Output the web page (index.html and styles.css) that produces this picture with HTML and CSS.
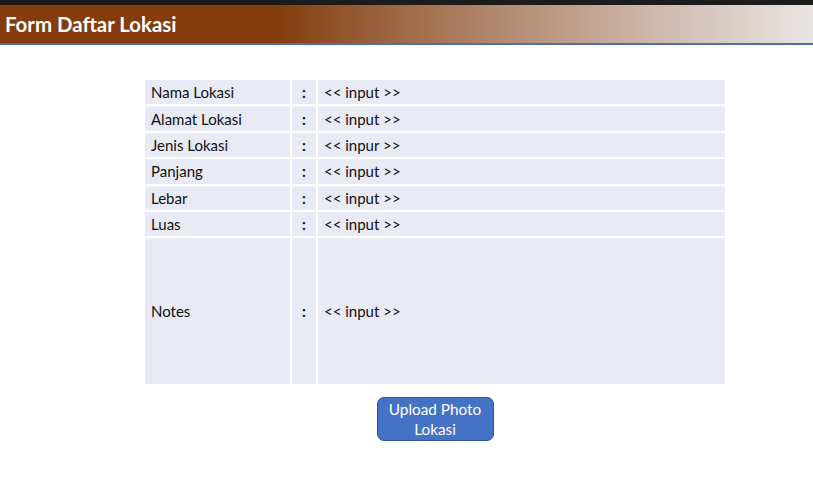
FILE: index.html
```html
<!DOCTYPE html>
<html>
<head>
<meta charset="utf-8">
<link rel="stylesheet" href="styles.css">
</head>
<body>
<div class="topstrip"></div>
<header class="titlebar"><h1 class="title">Form Daftar Lokasi</h1></header>
<main class="content">
  <div class="form-grid">
    <div class="cell label">Nama Lokasi</div><div class="cell colon">:</div><div class="cell value">&lt;&lt; input &gt;&gt;</div>
    <div class="cell label">Alamat Lokasi</div><div class="cell colon">:</div><div class="cell value">&lt;&lt; input &gt;&gt;</div>
    <div class="cell label">Jenis Lokasi</div><div class="cell colon">:</div><div class="cell value">&lt;&lt; inpur &gt;&gt;</div>
    <div class="cell label">Panjang</div><div class="cell colon">:</div><div class="cell value">&lt;&lt; input &gt;&gt;</div>
    <div class="cell label">Lebar</div><div class="cell colon">:</div><div class="cell value">&lt;&lt; input &gt;&gt;</div>
    <div class="cell label">Luas</div><div class="cell colon">:</div><div class="cell value">&lt;&lt; input &gt;&gt;</div>
    <div class="cell label tall">Notes</div><div class="cell colon tall">:</div><div class="cell value tall">&lt;&lt; input &gt;&gt;</div>
  </div>
  <button class="upload-btn">Upload Photo<br>Lokasi</button>
</main>
</body>
</html>
```
FILE: styles.css
```css
html, body {
  margin: 0;
  padding: 0;
  background: #ffffff;
  font-family: Lato, "Open Sans", sans-serif;
  width: 813px;
  height: 483px;
  overflow: hidden;
}
.topstrip {
  height: 5px;
  background: #1c1c1c;
}
.titlebar {
  height: 38px;
  background: linear-gradient(to right, #843c0c 0%, #843c0c 34%, #9a633e 47%, #b38a70 62%, #cdb7aa 80%, #e9e5e3 100%);
  border-bottom: 2px solid #4a6fb8;
  display: flex;
  align-items: center;
}
.title {
  margin: 0 0 0 5px;
  font-size: 20.4px;
  font-weight: 700;
  color: #ffffff;
}
.content {
  width: 580px;
  margin-left: 145px;
  display: flex;
  flex-direction: column;
  align-items: center;
  padding-top: 35px;
}
.form-grid {
  align-self: stretch;
  display: grid;
  grid-template-columns: 145px 24px 1fr;
  grid-template-rows: repeat(6, 24.4px) 146px;
  gap: 2px;
  background: #ffffff;
}
.cell {
  background: #e8eaf5;
  font-size: 15px;
  color: #111111;
  display: flex;
  align-items: center;
  white-space: nowrap;
}
.label { padding-left: 6px; }
.colon { justify-content: center; font-weight: 700; }
.value { padding-left: 6px; }
.upload-btn {
  margin-top: 13px;
  width: 117px;
  height: 44px;
  background: #4472c4;
  border: 1px solid #2f528f;
  border-radius: 7px;
  color: #ffffff;
  font-family: Lato, "Open Sans", sans-serif;
  font-size: 15.3px;
  line-height: 20px;
  padding: 0;
}
```
